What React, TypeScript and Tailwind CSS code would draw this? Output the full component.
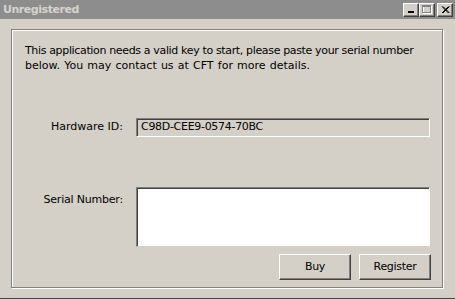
import React from "react";

function TitleBtn({ children }: { children: React.ReactNode }) {
  return (
    <div className="w-[16px] h-[14px] bg-[#d4d0c8] border border-t-white border-l-white border-r-[#404040] border-b-[#404040] shadow-[inset_-1px_-1px_0_#808080] flex items-center justify-center">
      {children}
    </div>
  );
}

export default function App() {
  return (
    <div
      className="w-[455px] h-[299px] bg-[#d4d0c8] flex flex-col border-b border-b-[#404040] overflow-hidden text-[11px] text-black"
      style={{ fontFamily: "'DejaVu Sans', Verdana, sans-serif" }}
    >
      <div className="h-[19px] bg-[#8d8d8d] flex items-center justify-between pl-[3px] pr-[2px] shrink-0">
        <span className="font-bold text-[11px] text-[#d6d3cc] leading-none tracking-[-0.45px]">
          Unregistered
        </span>
        <div className="flex items-center">
          <TitleBtn>
            <svg width="8" height="8" viewBox="0 0 8 8">
              <rect x="1" y="5" width="6" height="2" fill="#000" />
            </svg>
          </TitleBtn>
          <TitleBtn>
            <svg width="10" height="9" viewBox="0 0 10 9">
              <rect x="1.5" y="1.5" width="8" height="7" fill="none" stroke="#fff" />
              <rect x="0.5" y="0.5" width="8" height="7" fill="none" stroke="#808080" />
              <rect x="1" y="1" width="7" height="1" fill="#808080" />
            </svg>
          </TitleBtn>
          <div className="w-[2px]" />
          <TitleBtn>
            <svg width="9" height="8" viewBox="0 0 9 8">
              <path d="M1 0.5 L7.5 7 M2 0.5 L8.5 7 M7.5 0.5 L1 7 M8.5 0.5 L2 7" stroke="#000" strokeWidth="1" />
            </svg>
          </TitleBtn>
        </div>
      </div>
      <div className="flex-1 pt-[10px] pl-[11px] pr-[11px]">
        <div className="h-[259px] w-[432px] border border-[#808080] shadow-[inset_1px_1px_0_#fff,1px_1px_0_#fff] flex flex-col">
          <p className="mt-[13px] ml-[13px] mr-[8px] leading-[15px] whitespace-nowrap">
            <span className="block tracking-[-0.35px]">
              This application needs a valid key to start, please paste your serial number
            </span>
            <span className="block tracking-[0px] [word-spacing:0.7px]">
              below. You may contact us at CFT for more details.
            </span>
          </p>
          <div className="mt-[45px] flex items-center">
            <div className="w-[111px] text-right">Hardware ID:</div>
            <div className="ml-[13px] w-[294px] h-[19px] bg-[#d4d0c8] border border-t-[#808080] border-l-[#808080] border-r-white border-b-white shadow-[inset_1px_1px_0_#404040] flex items-center pl-[4px] tracking-[-0.3px]">
              C98D-CEE9-0574-70BC
            </div>
          </div>
          <div className="mt-[50px] flex items-start">
            <div className="w-[111px] text-right mt-[5px] tracking-[-0.2px]">Serial Number:</div>
            <div className="ml-[13px] w-[294px] h-[60px] bg-white border border-t-[#808080] border-l-[#808080] border-r-white border-b-[#d4d0c8] shadow-[inset_1px_1px_0_#404040]" />
          </div>
          <div className="mt-[7px] flex justify-end gap-[8px] pr-[11px]">
            <button className="w-[72px] h-[26px] bg-[#d4d0c8] border border-t-white border-l-white border-r-[#404040] border-b-[#404040] shadow-[inset_-1px_-1px_0_#808080] tracking-[-0.3px]">
              Buy
            </button>
            <button className="w-[72px] h-[26px] bg-[#d4d0c8] border border-t-white border-l-white border-r-[#404040] border-b-[#404040] shadow-[inset_-1px_-1px_0_#808080] tracking-[-0.3px]">
              Register
            </button>
          </div>
        </div>
      </div>
    </div>
  );
}
